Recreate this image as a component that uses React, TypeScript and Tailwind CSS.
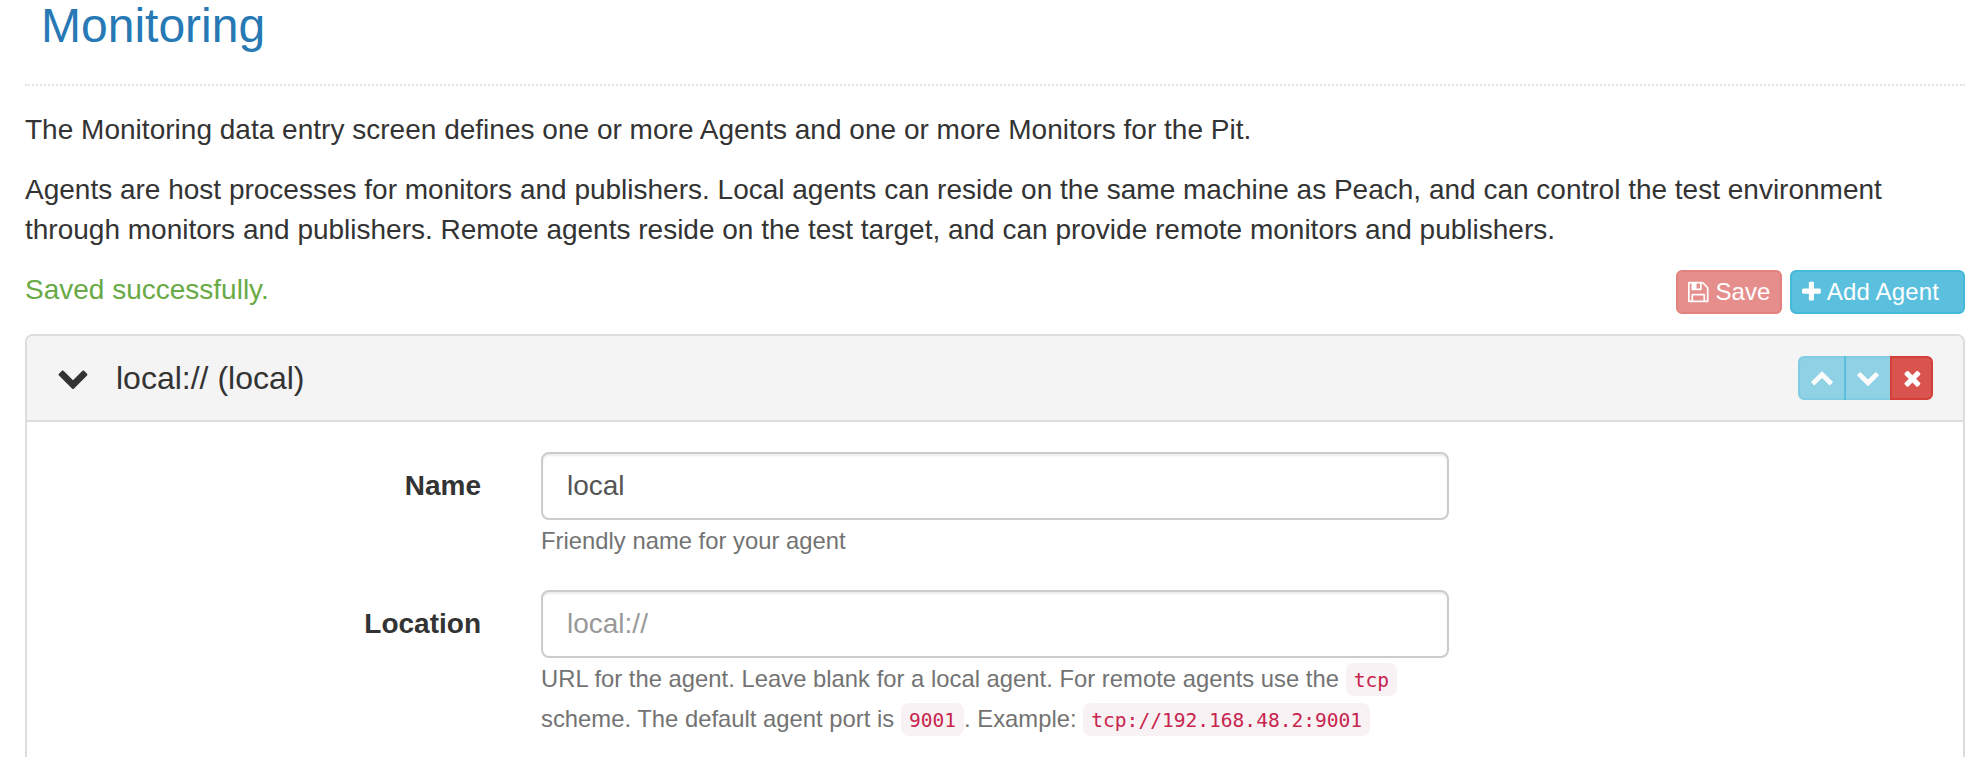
import React from "react";

type IconProps = { width: number; size: number; d: string; className?: string };

function Icon({ width, size, d, className }: IconProps) {
  return (
    <svg
      viewBox={`0 0 ${width} 1792`}
      width={(width / 1792) * size}
      height={size}
      fill="currentColor"
      className={className}
      aria-hidden="true"
    >
      <path d={d} />
    </svg>
  );
}

const SAVE =
  "M384 1536h768v-384H384v384zm896 0h128V640q0-14-10-38.5t-20-34.5l-281-281q-10-10-34-20t-39-10v416q0 40-28 68t-68 28H352q-40 0-68-28t-28-68V256H128v1280h128v-416q0-40 28-68t68-28h832q40 0 68 28t28 68v416zM896 608V288q0-13-9.5-22.5T864 256H672q-13 0-22.5 9.5T640 288v320q0 13 9.5 22.5T672 640h192q13 0 22.5-9.5T896 608zm640 32v928q0 40-28 68t-68 28H96q-40 0-68-28t-28-68V224q0-40 28-68t68-28h928q40 0 88 20t76 48l280 280q28 28 48 76t20 88z";
const PLUS =
  "M1408 736v192q0 40-28 68t-68 28H896v416q0 40-28 68t-68 28H608q-40 0-68-28t-28-68v-416H96q-40 0-68-28T0 928V736q0-40 28-68t68-28h416V224q0-40 28-68t68-28h192q40 0 68 28t28 68v416h416q40 0 68 28t28 68z";
const TIMES =
  "M1298 1322q0 40-28 68l-136 136q-28 28-68 28t-68-28l-294-294-294 294q-28 28-68 28t-68-28l-136-136q-28-28-28-68t28-68l294-294-294-294q-28-28-28-68t28-68l136-136q28-28 68-28t68 28l294 294 294-294q28-28 68-28t68 28l136 136q28 28 28 68t-28 68l-294 294 294 294q28 28 28 68z";
const UP =
  "M1683 1331l-166 165q-19 19-45 19t-45-19l-531-531-531 531q-19 19-45 19t-45-19L109 1331q-19-19-19-45.5t19-45.5l742-741q19-19 45-19t45 19l742 741q19 19 19 45.5t-19 45.5z";
const DOWN =
  "M1683 808L941 1549q-19 19-45 19t-45-19L109 808q-19-19-19-45.5T109 717l166-165q19-19 45-19t45 19l531 531 531-531q19-19 45-19t45 19l166 165q19 19 19 45.5t-19 45.5z";

function Code({ children }: { children: React.ReactNode }) {
  return (
    <code className="rounded-lg bg-[#f9f2f4] px-2 pt-[6px] pb-1 font-['DejaVu_Sans_Mono',monospace] text-[19.57px] leading-none tracking-normal text-[#c7254e]">
      {children}
    </code>
  );
}

type FieldProps = {
  id: string;
  label: string;
  value?: string;
  placeholder?: string;
  children: React.ReactNode;
};

function Field({ id, label, value, placeholder, children }: FieldProps) {
  return (
    <div className="flex h-[108px]">
      <label htmlFor={id} className="w-[454px] shrink-0 pt-[14px] text-right font-bold">
        {label}
      </label>
      <div className="ml-[60px] w-[908px]">
        <input
          id={id}
          defaultValue={value}
          placeholder={placeholder}
          className="block h-[68px] w-full rounded-lg border-2 border-[#ccc] bg-white px-6 text-[28px] text-[#555] shadow-[inset_0_2px_2px_rgba(0,0,0,0.075)] outline-none placeholder:text-[#999]"
        />
        <p className="pt-px text-[23.8px] leading-10 tracking-[0.016px] text-[#737373]">{children}</p>
      </div>
    </div>
  );
}

export default function App() {
  return (
    <main className="flex h-[757px] flex-col overflow-hidden bg-white pr-2 pl-[25px] font-['Liberation_Sans',Arial,sans-serif] text-[28px] leading-10 text-[#333]">
      <header className="h-[86px] shrink-0 border-b-2 border-dotted border-[#e2e2e2] pl-4">
        <h1 className="text-5xl leading-[52px] text-[#2679b5]">Monitoring</h1>
      </header>
      <p className="mt-6 tracking-[0.015px]">
        The Monitoring data entry screen defines one or more Agents and one or more Monitors for the Pit.
      </p>
      <p className="mt-5">
        Agents are host processes for monitors and publishers. Local agents can reside on the same machine as Peach,
        and can control the test environment through monitors and publishers. Remote agents reside on the test target,
        and can provide remote monitors and publishers.
      </p>
      <div className="mt-5 flex h-16 shrink-0 items-start justify-between">
        <span className="text-[#69aa46]">Saved successfully.</span>
        <div className="flex gap-2 text-2xl leading-9 text-white">
          <button
            disabled
            className="flex h-11 w-[106px] items-center gap-[7px] rounded-md border-2 border-[#d43f3a] bg-[#d9534f] pl-[10px] opacity-65"
          >
            <Icon width={1536} size={24} d={SAVE} />
            <span>Save</span>
          </button>
          <button className="flex h-11 w-[175px] items-center gap-[6px] rounded-md border-2 border-[#46b8da] bg-[#5bc0de] pl-[10px]">
            <Icon width={1408} size={24} d={PLUS} />
            <span className="tracking-[0.15px]">Add Agent</span>
          </button>
        </div>
      </div>
      <section className="grow rounded-t-lg border-2 border-b-0 border-[#ddd]">
        <div className="flex h-[86px] items-center rounded-t-md border-b-2 border-[#ddd] bg-[#f4f4f4] px-[30px]">
          <Icon width={1792} size={32} d={DOWN} className="mb-0.5" />
          <h2 className="ml-[27px] grow text-[32px]">local:// (local)</h2>
          <div className="flex text-white">
            <button
              disabled
              className="flex h-11 w-12 items-center justify-center rounded-l-md border-2 border-[#46b8da] bg-[#5bc0de] opacity-65"
            >
              <Icon width={1792} size={24} d={UP} className="mb-0.5" />
            </button>
            <button
              disabled
              className="-ml-0.5 flex h-11 w-12 items-center justify-center border-2 border-[#46b8da] bg-[#5bc0de] opacity-65"
            >
              <Icon width={1792} size={24} d={DOWN} className="mb-0.5" />
            </button>
            <button className="relative -ml-0.5 flex h-11 w-[43px] items-center justify-center rounded-r-md border-2 border-[#d43f3a] bg-[#d9534f]">
              <Icon width={1408} size={24} d={TIMES} className="ml-px" />
            </button>
          </div>
        </div>
        <div className="flex flex-col gap-[30px] pt-[30px]">
          <Field id="name" label="Name" value="local">
            Friendly name for your agent
          </Field>
          <Field id="location" label="Location" placeholder="local://">
            URL for the agent. Leave blank for a local agent. For remote agents use the <Code>tcp</Code> scheme. The
            default agent port is <Code>9001</Code>. Example: <Code>tcp://192.168.48.2:9001</Code>
          </Field>
        </div>
      </section>
    </main>
  );
}
